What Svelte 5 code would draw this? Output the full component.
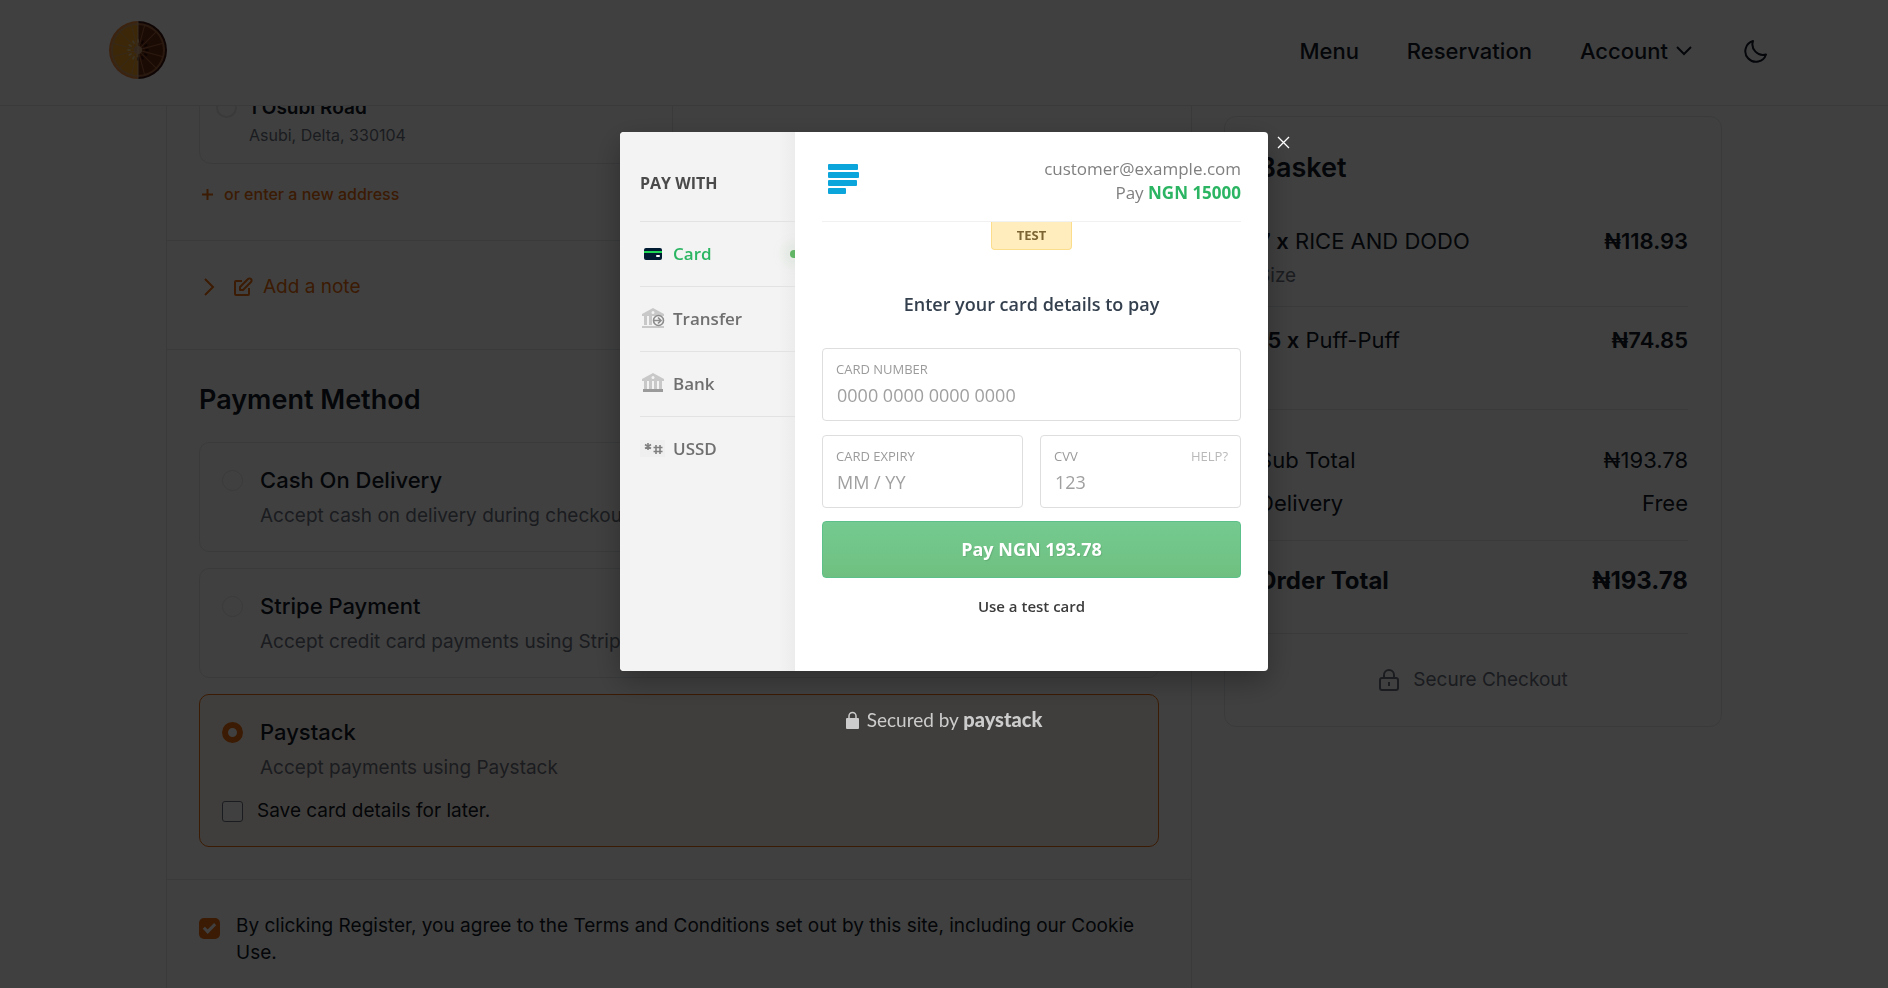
<script lang="ts">
    interface Method {
        id: string;
        title: string;
        text: string;
    }

    const methods: Method[] = [
        { id: "cod", title: "Cash On Delivery", text: "Accept cash on delivery during checkout" },
        { id: "stripe", title: "Stripe Payment", text: "Accept credit card payments using Stripe" },
        { id: "paystack", title: "Paystack", text: "Accept payments using Paystack" },
    ];

    const items = [
        { qty: 7, name: "RICE AND DODO", option: "Size", price: "₦118.93" },
        { qty: 15, name: "Puff-Puff", option: "", price: "₦74.85" },
    ];

    const channels = ["Card", "Transfer", "Bank", "USSD"];

    const spokes = [15, 45, 75, 105, 135, 165, 195, 225, 255, 285, 315, 345];

    let method = $state("paystack");
    let channel = $state("Card");
    let address = $state("");
    let saveCard = $state(false);
    let agreed = $state(true);
</script>

<div class="page">
    <header class="topbar">
        <div class="topbar-inner">
            <a class="logo" href="/" aria-label="Home">
                <svg width="60" height="60" viewBox="0 0 60 60">
                    <path d="M30 1a29 29 0 0 0 0 58z" fill="#f08a3c" />
                    <path d="M30 1a29 29 0 0 1 0 58z" fill="#3c1414" />
                    <path d="M30 3a27 27 0 0 0 0 54z" fill="#d8a060" />
                    <path d="M30 3a27 27 0 0 1 0 54z" fill="#a8663c" />
                    <path d="M30 5a25 25 0 0 0 0 50z" fill="#f0a020" />
                    <path d="M30 5a25 25 0 0 1 0 50z" fill="#6e2c14" />
                    {#each spokes as angle}
                        <path
                            d="M30 30V4"
                            stroke={angle < 180 ? "#a8663c" : "#d8a060"}
                            stroke-width="1"
                            transform="rotate({angle} 30 30)" />
                        <ellipse
                            cx="30"
                            cy="21"
                            rx="1"
                            ry="2"
                            fill={angle < 180 ? "#2c0c0c" : "#e8c890"}
                            transform="rotate({angle + 15} 30 30)" />
                    {/each}
                    <circle cx="30" cy="30" r="4" fill="#d0a078" />
                    <path d="M30 1v58" stroke="#d8b890" />
                </svg>
            </a>
            <nav>
                <a href="/menu">Menu</a>
                <a href="/reservation">Reservation</a>
                <button type="button" class="account">
                    Account
                    <svg width="16" height="16" viewBox="0 0 16 16" fill="none" stroke="currentColor" stroke-width="2">
                        <path d="M1 4l7 7 7-7" />
                    </svg>
                </button>
                <button type="button" class="theme" aria-label="Dark mode">
                    <svg width="24" height="24" viewBox="0 0 24 24" fill="none" stroke="currentColor" stroke-width="2" stroke-linejoin="round">
                        <path d="M9 2A10.600 10.600 0 0 0 22 15.500 10.600 10.600 0 1 1 9 2z" />
                    </svg>
                </button>
            </nav>
        </div>
    </header>

    <main>
        <section class="panel">
            <div class="block addresses">
                <label class="address">
                    <input type="radio" name="address" value="osubi" bind:group={address} />
                    <span>
                        <strong>1 Osubi Road</strong>
                        <small>Asubi, Delta, 330104</small>
                    </span>
                </label>
                <button type="button" class="link new-address">
                    <svg width="13" height="13" viewBox="0 0 13 13" stroke="currentColor" stroke-width="2">
                        <path d="M6.500 1v11M1 6.500h11" />
                    </svg>
                    or enter a new address
                </button>
            </div>

            <div class="block">
                <button type="button" class="link note">
                    <svg width="12" height="18" viewBox="0 0 12 18" fill="none" stroke="currentColor" stroke-width="2">
                        <path d="M2 1l8 8-8 8" />
                    </svg>
                    <svg class="pencil" width="20" height="20" viewBox="0 0 20 20" fill="none" stroke="currentColor" stroke-width="2" stroke-linejoin="round">
                        <path d="M9 4H3a1 1 0 0 0-1 1v12a1 1 0 0 0 1 1h12a1 1 0 0 0 1-1v-6" />
                        <path d="M7 13v-3l8-8a1.500 1.500 0 0 1 3 3l-8 8z" />
                    </svg>
                    Add a note
                </button>
            </div>

            <div class="block payments">
                <h2>Payment Method</h2>
                {#each methods as { id, title, text }}
                    <div class="method" class:selected={method === id}>
                        <label class="method-head">
                            <input type="radio" name="method" value={id} bind:group={method} />
                            <span>{title}</span>
                        </label>
                        <p>{text}</p>
                        {#if method === id}
                            <label class="save">
                                <input type="checkbox" bind:checked={saveCard} />
                                <span>Save card details for later.</span>
                            </label>
                        {/if}
                    </div>
                {/each}
            </div>

            <label class="block terms">
                <input type="checkbox" bind:checked={agreed} />
                <span>
                    By clicking Register, you agree to the Terms and Conditions set out by this site, including our Cookie
                    Use.
                </span>
            </label>
        </section>

        <aside class="basket">
            <h2>Basket</h2>
            <ul>
                {#each items as item}
                    <li>
                        <div class="row">
                            <span><b>{item.qty} x</b> {item.name}</span>
                            <b>{item.price}</b>
                        </div>
                        {#if item.option}
                            <p>{item.option}</p>
                        {/if}
                    </li>
                {/each}
            </ul>
            <div class="totals">
                <div class="row"><span>Sub Total</span><span>₦193.78</span></div>
                <div class="row"><span>Delivery</span><span>Free</span></div>
            </div>
            <div class="row order-total"><span>Order Total</span><span>₦193.78</span></div>
            <div class="secure">
                <svg width="22" height="24" viewBox="0 0 22 24" fill="none" stroke="currentColor" stroke-width="2">
                    <rect x="2" y="10" width="18" height="12" rx="2" />
                    <path d="M6 10V7a5 5 0 0 1 10 0v3M11 14v4" />
                </svg>
                Secure Checkout
            </div>
        </aside>
    </main>
</div>

<div class="overlay">
    <div class="dialog" role="dialog" aria-label="Paystack checkout">
        <button type="button" class="close" aria-label="Close">
            <svg width="13" height="13" viewBox="0 0 13 13" stroke="currentColor" stroke-width="1.300">
                <path d="M1 1l11 11M12 1L1 12" />
            </svg>
        </button>

        <div class="channels">
            <h3>PAY WITH</h3>
            {#each channels as name}
                <button type="button" class:active={channel === name} onclick={() => (channel = name)}>
                    {#if name === "Card"}
                        <svg width="26" height="20" viewBox="0 0 26 20">
                            <rect x="4" y="4" width="18" height="12" rx="2" fill="#011b33" />
                            <path d="M4 7h18v2H4z" fill="#1fd655" />
                            <rect x="16" y="11" width="4" height="2" rx="1" fill="#fff" />
                        </svg>
                    {:else if name === "Transfer"}
                        <svg width="26" height="22" viewBox="0 0 26 22" fill="#c8c8c8">
                            <path fill-rule="evenodd" d="M2 6L13 0l11 6v2H2zM13 3a1.500 1.500 0 1 0 0 3 1.500 1.500 0 0 0 0-3z" />
                            <path d="M4 8h3v9H4zM9 8h3v9H9zM2 18h22v2H2z" />
                            <circle cx="18.500" cy="12.500" r="5" fill="#f3f3f3" stroke="#8c8c8c" stroke-width="1.600" />
                            <path d="M13 12.500h8M18 9.500l3 3-3 3" fill="none" stroke="#8c8c8c" stroke-width="1.600" />
                        </svg>
                    {:else if name === "Bank"}
                        <svg width="26" height="22" viewBox="0 0 26 22" fill="#c8c8c8">
                            <path fill-rule="evenodd" d="M2 6L13 0l11 6v2H2zM13 3a1.500 1.500 0 1 0 0 3 1.500 1.500 0 0 0 0-3z" />
                            <path d="M4 8h3v8H4zM9 8h3v8H9zM14 8h3v8h-3zM19 8h3v8h-3z" />
                            <path d="M3 16h20v3H3z" fill="#9a9a9a" />
                        </svg>
                    {:else}
                        <svg width="26" height="18" viewBox="0 0 26 18" fill="none" stroke="#808080" stroke-width="1.600">
                            <rect width="25" height="17" fill="#efefef" stroke="none" />
                            <path d="M8 3v7M5 4.500l6 4M11 4.500l-6 4" />
                            <path d="M16 5v9M20 5v9M13.500 7.500h9M13.500 11.500h9" />
                        </svg>
                    {/if}
                    <span>{name}</span>
                </button>
            {/each}
        </div>

        <form class="pay">
            <div class="pay-head">
                <svg width="32" height="31" viewBox="0 0 32 31" fill="#0ba4db">
                    <rect width="30" height="6" rx="1" />
                    <rect y="8" width="31" height="6" rx="1" />
                    <rect y="16" width="29" height="6" rx="1" />
                    <rect y="24" width="18" height="6" rx="1" />
                </svg>
                <div class="customer">
                    customer@example.com<br />
                    Pay <b>NGN 15000</b>
                </div>
            </div>
            <div class="badge">TEST</div>
            <h3>Enter your card details to pay</h3>
            <div class="fields">
                <div class="field wide">
                    <label for="number">CARD NUMBER</label>
                    <input id="number" type="text" placeholder="0000 0000 0000 0000" />
                </div>
                <div class="field">
                    <label for="expiry">CARD EXPIRY</label>
                    <input id="expiry" type="text" placeholder="MM / YY" />
                </div>
                <div class="field">
                    <div class="field-head">
                        <label for="cvv">CVV</label>
                        <a href="#help">HELP?</a>
                    </div>
                    <input id="cvv" type="text" placeholder="123" />
                </div>
            </div>
            <button type="button" class="submit">Pay NGN 193.78</button>
            <button type="button" class="test-card">Use a test card</button>
        </form>
    </div>

    <div class="secured">
        <svg width="13" height="18" viewBox="0 0 13 18">
            <path d="M3 8V5a3.500 3.500 0 0 1 7 0v3" fill="none" stroke="currentColor" stroke-width="1.500" />
            <rect y="7" width="13" height="11" rx="1" fill="currentColor" />
        </svg>
        <span>Secured by <b>paystack</b></span>
    </div>
</div>

<style>
    :global(body) {
        overflow: hidden;
        background: #fff;
        color: #111827;
        font-family: Inter, sans-serif;
        font-size: 19px;
        line-height: 28px;
    }

    h2,
    h3,
    p,
    ul {
        margin: 0;
        padding: 0;
    }

    button {
        padding: 0;
        border: none;
        background: none;
        color: inherit;
        font: inherit;
        cursor: pointer;
    }

    a {
        color: inherit;
        text-decoration: none;
    }

    .page,
    .page * {
        box-sizing: border-box;
    }

    .topbar {
        position: fixed;
        inset: 0 0 auto;
        z-index: 1;
        border-bottom: 1px solid #e5e7eb;
        background: #fff;
    }

    .topbar-inner {
        display: flex;
        align-items: center;
        justify-content: space-between;
        max-width: 1672px;
        height: 105px;
        margin: 0 auto;
        padding: 0 12px 6px 0;
    }

    .logo svg {
        display: block;
    }

    nav {
        display: flex;
        align-items: center;
        gap: 48px;
        padding-top: 2px;
        font-size: 22px;
        font-weight: 500;
    }

    nav svg {
        display: block;
    }

    .account {
        display: flex;
        align-items: center;
        gap: 8px;
    }

    .theme {
        margin-left: 4px;
    }

    main {
        display: grid;
        grid-template-columns: 1fr 32%;
        align-items: start;
        gap: 32px;
        max-width: 1556px;
        margin: 0 auto;
    }

    .panel {
        border: solid #e5e7eb;
        border-width: 0 1px;
        min-height: 100vh;
    }

    .block {
        padding: 32px;
    }

    .block + .block {
        border-top: 1px solid #e5e7eb;
    }

    input[type="radio"],
    input[type="checkbox"] {
        appearance: none;
        flex: none;
        width: 21px;
        height: 21px;
        margin: 0;
        border: 1px solid #e5e7eb;
        border-radius: 50%;
        background: #fff;
    }

    input[type="checkbox"] {
        border-color: #6b7280;
        border-radius: 3px;
    }

    input[type="radio"]:checked {
        border: 6px solid #ec6b0c;
    }

    input[type="checkbox"]:checked {
        border: none;
        border-radius: 5px;
        background: #ec6b0c;
    }

    input[type="checkbox"]:checked::after {
        content: "";
        display: block;
        width: 7px;
        height: 12px;
        margin: 3px 7px;
        box-sizing: border-box;
        border: solid #fff;
        border-width: 0 3px 3px 0;
        transform: rotate(45deg);
    }

    .addresses {
        padding-top: 80px;
    }

    .address {
        display: flex;
        gap: 12px;
        width: calc(50% - 6px);
        padding: 13px 16px 15px;
        border: 1px solid #e5e7eb;
        border-radius: 12px;
    }

    .address input {
        margin-top: 3px;
        border-width: 2px;
    }

    .address strong {
        display: block;
        font-weight: 600;
    }

    .address small {
        display: block;
        color: #6b7280;
        font-size: 16px;
        line-height: 26px;
    }

    .link {
        display: flex;
        align-items: center;
        color: #ec6b0c;
    }

    .new-address {
        gap: 10px;
        margin: 16px 2px 0;
        font-size: 16px;
        font-weight: 500;
    }

    .note {
        gap: 10px;
        margin: 0 4px 16px;
    }

    .pencil {
        margin-left: 8px;
    }

    h2 {
        font-size: 27px;
        font-weight: 600;
        line-height: 36px;
    }

    .payments h2 {
        margin-bottom: 24px;
    }

    .method {
        padding: 23px 22px 21px;
        border: 1px solid #e5e7eb;
        border-radius: 10px;
    }

    .method + .method {
        margin-top: 16px;
    }

    .method.selected {
        border-color: #ec6b0c;
        background: #fff7ed;
    }

    .method-head {
        display: flex;
        align-items: center;
        gap: 17px;
        font-size: 22px;
        font-weight: 500;
    }

    .method p {
        margin: 8px 0 0 38px;
        color: #6b7280;
    }

    .save {
        display: flex;
        align-items: center;
        gap: 14px;
        margin-top: 15px;
    }

    .terms {
        display: flex;
        gap: 16px;
        line-height: 27px;
    }

    .terms input {
        margin-top: 6px;
    }

    .basket {
        margin-top: 116px;
        padding: 33px 33px 32px;
        border: 1px solid #e5e7eb;
        border-radius: 12px;
        font-size: 22px;
    }

    .basket h2 {
        margin-bottom: 41px;
    }

    .basket ul {
        padding-bottom: 55px;
        list-style: none;
    }

    .basket li + li {
        margin-top: 16px;
        padding-top: 19px;
        border-top: 1px solid #e5e7eb;
    }

    .basket b {
        font-weight: 600;
    }

    .basket p {
        margin-top: 7px;
        color: #6b7280;
        font-size: 19px;
    }

    .row {
        display: flex;
        justify-content: space-between;
    }

    .totals {
        display: grid;
        gap: 15px;
        padding: 36px 0 23px;
        border-top: 1px solid #e5e7eb;
    }

    .order-total {
        padding: 24px 0 36px;
        border-top: 1px solid #e5e7eb;
        font-size: 24px;
        font-weight: 700;
        line-height: 32px;
    }

    .secure {
        display: flex;
        align-items: center;
        justify-content: center;
        gap: 13px;
        padding-top: 32px;
        border-top: 1px solid #e5e7eb;
        color: #6b7280;
        font-size: 19px;
    }

    .overlay {
        position: fixed;
        inset: 0;
        z-index: 2;
        display: flex;
        flex-direction: column;
        align-items: center;
        padding: 132px 16px 0;
        background: rgba(0, 0, 0, 0.75);
        font-family: "Open Sans", "Noto Sans", sans-serif;
    }

    .dialog {
        position: relative;
        display: grid;
        grid-template-columns: 175px 1fr;
        width: 100%;
        max-width: 648px;
        border-radius: 4px;
        background: #fff;
        box-shadow: 0 10px 30px rgba(0, 0, 0, 0.3);
    }

    .close {
        position: absolute;
        top: 4px;
        left: 100%;
        margin-left: 9px;
        color: #fff;
        line-height: 1;
    }

    .close svg {
        display: block;
    }

    .channels {
        padding: 39px 0 0 20px;
        border-radius: 4px 0 0 4px;
        background: linear-gradient(to left, #ececec, #f3f3f3 16px);
        overflow: hidden;
    }

    .channels h3 {
        padding-bottom: 26px;
        color: #4a4a4a;
        font-size: 16px;
        font-weight: 700;
        line-height: 24px;
    }

    .channels button {
        position: relative;
        display: flex;
        align-items: center;
        gap: 7px;
        width: 100%;
        height: 65px;
        border-top: 1px solid #e2e2e2;
        color: #6f6f6f;
        font-size: 17px;
        font-weight: 600;
    }

    .channels .active {
        color: #2bb563;
    }

    .channels .active::after {
        content: "";
        position: absolute;
        right: -3px;
        width: 8px;
        height: 8px;
        border-radius: 50%;
        background: #61b565;
        box-shadow: 0 0 12px 8px rgba(97, 181, 101, 0.08);
    }

    .pay {
        padding: 25px 27px 52px;
        text-align: center;
    }

    .pay-head {
        display: flex;
        align-items: center;
        justify-content: space-between;
        padding: 0 0 16px 6px;
        border-bottom: 1px solid #f1f1f1;
    }

    .pay-head svg {
        margin-bottom: 4px;
    }

    .customer {
        color: #808080;
        font-size: 17px;
        line-height: 24px;
        text-align: right;
    }

    .customer b {
        color: #2bb563;
    }

    .badge {
        width: 79px;
        margin: 0 auto 41px;
        border: 1px solid #fbdd8b;
        border-top: none;
        border-radius: 0 0 4px 4px;
        background: #ffedbd;
        color: #7d6433;
        font-size: 13px;
        font-weight: 700;
        line-height: 27px;
    }

    .pay h3 {
        margin-bottom: 31px;
        color: #35404f;
        font-size: 18px;
        font-weight: 600;
        line-height: 26px;
    }

    .fields {
        display: grid;
        grid-template-columns: 1fr 1fr;
        gap: 14px 17px;
        margin-bottom: 13px;
    }

    .field {
        min-width: 0;
        padding: 12px 12px 13px 13px;
        border: 1px solid #dedede;
        border-radius: 4px;
        color: #9b9b9b;
        font-size: 13px;
        line-height: 16px;
        text-align: left;
    }

    .wide {
        grid-column: span 2;
    }

    .field label {
        display: block;
    }

    .field-head {
        display: flex;
        justify-content: space-between;
    }

    .field-head a {
        color: #b9b9b9;
    }

    .field input {
        display: block;
        width: 100%;
        height: 24px;
        margin-top: 6px;
        padding: 0 1px;
        border: none;
        outline: none;
        background: none;
        box-sizing: border-box;
        color: #4a4a4a;
        font: 18px "Open Sans", "Noto Sans", sans-serif;
    }

    .field input::placeholder {
        color: #a0a0a0;
    }

    .submit {
        display: block;
        width: 100%;
        border: 1px solid #5cc08a;
        border-radius: 4px;
        background: linear-gradient(#74ca90, #6fc080);
        color: #fff;
        font-size: 18px;
        font-weight: 700;
        line-height: 55px;
        text-shadow: 1px 1px 1px rgba(0, 0, 0, 0.1);
    }

    .test-card {
        margin-top: 17px;
        color: #3c3c3c;
        font-size: 15px;
        font-weight: 600;
        line-height: 22px;
    }

    .secured {
        display: flex;
        align-items: center;
        gap: 8px;
        margin-top: 36px;
        color: #ccc;
        font-family: Lato, sans-serif;
        font-size: 19px;
        line-height: 24px;
    }

    .secured b {
        font-size: 20px;
        font-weight: 900;
    }
</style>
